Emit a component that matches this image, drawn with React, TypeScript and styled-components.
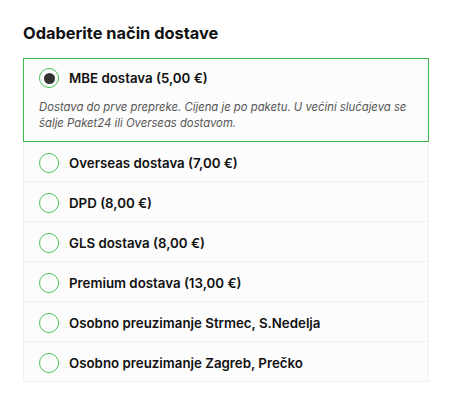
import styled, {createGlobalStyle} from "styled-components";
import {useState} from "react";

interface IOption {
  id: string;
  label: string;
  description?: string;
}

const options: IOption[] = [
  {
    id: 'mbe',
    label: 'MBE dostava (5,00 €)',
    description: 'Dostava do prve prepreke. Cijena je po paketu. U većini slučajeva se šalje Paket24 ili Overseas dostavom.',
  },
  {id: 'overseas', label: 'Overseas dostava (7,00 €)'},
  {id: 'dpd', label: 'DPD (8,00 €)'},
  {id: 'gls', label: 'GLS dostava (8,00 €)'},
  {id: 'premium', label: 'Premium dostava (13,00 €)'},
  {id: 'strmec', label: 'Osobno preuzimanje Strmec, S.Nedelja'},
  {id: 'zagreb', label: 'Osobno preuzimanje Zagreb, Prečko'},
];

const App = () => {
  const [selected, setSelected] = useState('mbe');

  return (
    <>
      <GlobalStyle/>
      <Wrapper>
        <Title>Odaberite način dostave</Title>
        <List>
          {options.map((option) => {
            const active = option.id === selected;
            return (
              <Option key={option.id} $active={active} onClick={() => setSelected(option.id)}>
                <OptionHead>
                  <Radio $active={active}/>
                  <Label>{option.label}</Label>
                </OptionHead>
                {active && option.description && <Description>{option.description}</Description>}
              </Option>
            );
          })}
        </List>
      </Wrapper>
    </>
  );
};

const GlobalStyle = createGlobalStyle`
  body {
    margin: 0;
    background: #fff;
    font-family: Inter, "Noto Sans", sans-serif;
    color: #111;
  }
`;

const Wrapper = styled.div`
  padding: 22px 24px 0 23px;
  width: 406px;
`;

const Title = styled.h2`
  margin: 0 0 14px;
  font-size: 16.4px;
  font-weight: 700;
  line-height: 22px;
  color: #111;
`;

const List = styled.div`
  display: flex;
  flex-direction: column;
`;

const Option = styled.div<{ $active: boolean }>`
  cursor: pointer;
  background: #fcfcfc;
  border: 1px solid ${({$active}) => ($active ? '#3dba4b' : '#efefef')};
  border-top-width: ${({$active}) => ($active ? '1px' : '0')};
  margin-top: ${({$active}) => ($active ? '-1px' : '0')};
  padding: ${({$active}) => ($active ? '9px 15px 10px' : '11px 15px 8px')};

  &:first-child {
    margin-top: 0;
    border-top-width: 1px;
  }
`;

const OptionHead = styled.div`
  display: flex;
  align-items: center;
  gap: 10px;
  height: 20px;
`;

const Radio = styled.span<{ $active: boolean }>`
  box-sizing: border-box;
  flex: none;
  width: 20px;
  height: 20px;
  border-radius: 50%;
  border: 1.5px solid #4cc05a;
  display: flex;
  align-items: center;
  justify-content: center;

  &::after {
    content: '';
    display: ${({$active}) => ($active ? 'block' : 'none')};
    width: 11px;
    height: 11px;
    border-radius: 50%;
    background: #333;
  }
`;

const Label = styled.span`
  font-size: 13.3px;
  font-weight: 600;
  color: #111;
`;

const Description = styled.p`
  margin: 11px 0 0;
  font-size: 11.3px;
  font-style: italic;
  line-height: 16px;
  color: #555;
`;

export default App;
